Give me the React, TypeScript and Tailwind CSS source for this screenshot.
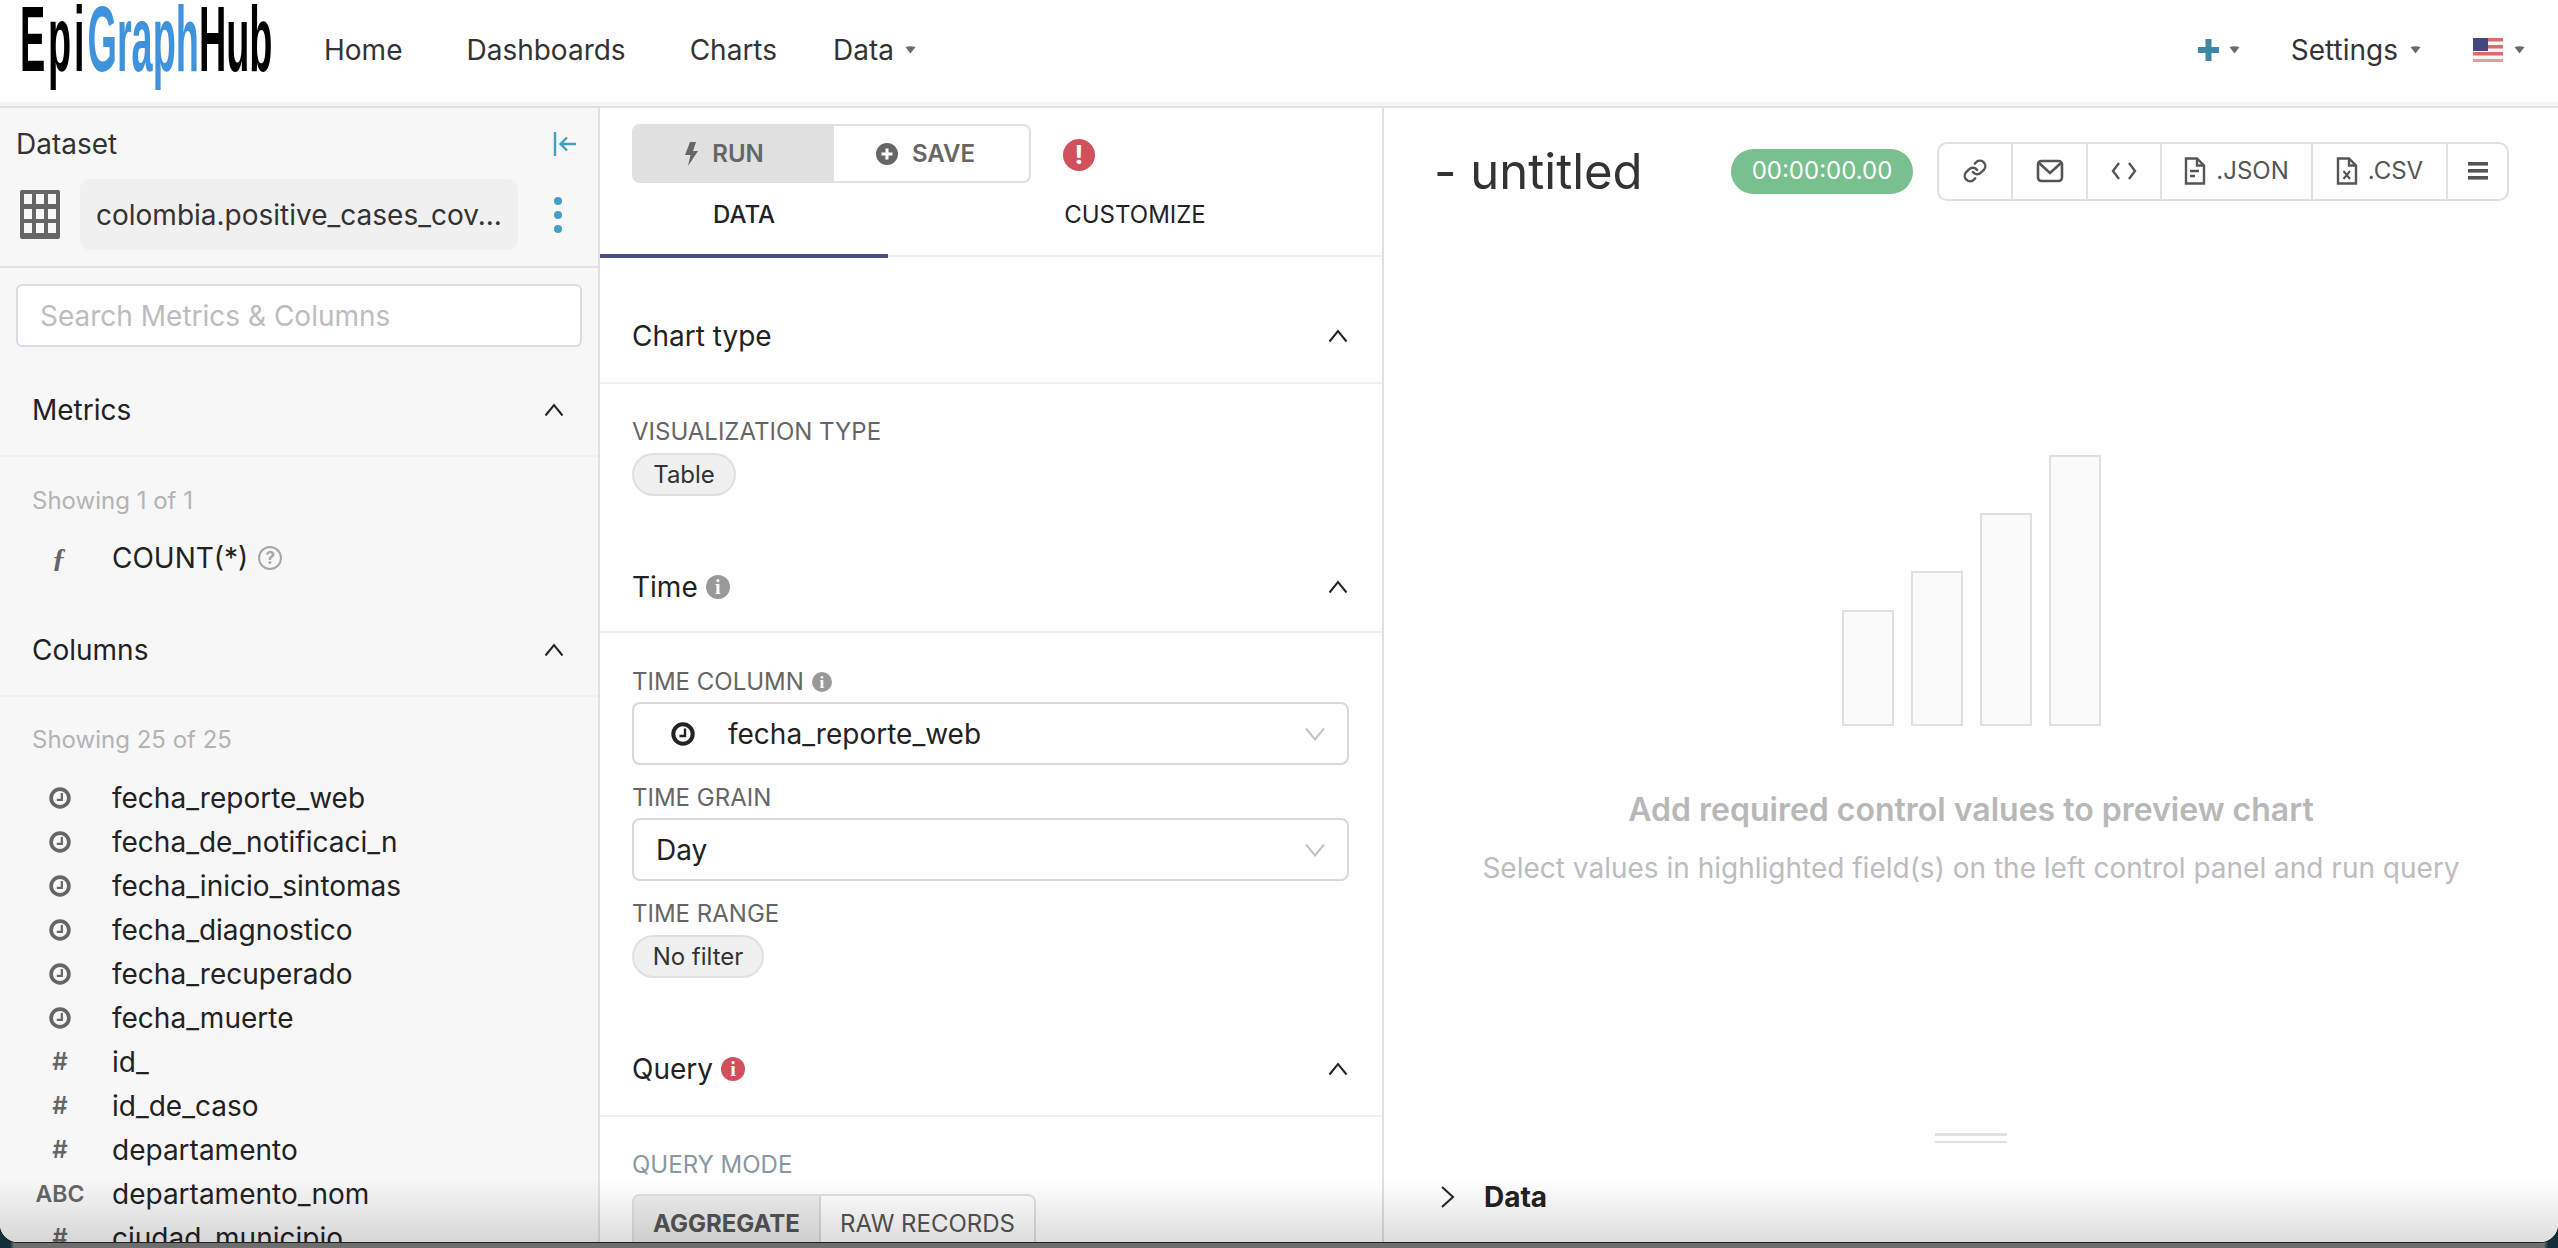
import React from "react";

const sans = "font-['Inter','Liberation_Sans',sans-serif]";

function Caret({ className = "" }: { className?: string }) {
  return (
    <svg width="11" height="8" viewBox="0 0 11 8" className={className}>
      <path d="M0.5 1 Q5.5 -0.5 10.5 1 L5.5 7.5 Z" fill="#6b6b6b" />
    </svg>
  );
}

function Clock({ size = 24, color = "#666666" }: { size?: number; color?: string }) {
  return (
    <svg width={size} height={size} viewBox="0 0 24 24">
      <circle cx="12" cy="12" r="9.7" fill="none" stroke={color} strokeWidth="4" />
      <path d="M14 6.5V14H8.5" fill="none" stroke={color} strokeWidth="2.4" />
    </svg>
  );
}

function Chevron({ className = "" }: { className?: string }) {
  return (
    <svg width="20" height="14" viewBox="0 0 20 14" className={className}>
      <path d="M1.5 12.5L10 2L18.5 12.5" fill="none" stroke="#222222" strokeWidth="2" />
    </svg>
  );
}

function SelectChevron() {
  return (
    <svg width="20" height="14" viewBox="0 0 20 14">
      <path d="M1 1.5L10 12.5L19 1.5" fill="none" stroke="#c4c4c4" strokeWidth="2" />
    </svg>
  );
}

function Info({ color = "#999999" }: { color?: string }) {
  return (
    <span
      className="inline-flex h-[24px] w-[24px] items-center justify-center rounded-full font-['Liberation_Serif',serif] text-[20px] font-bold leading-none text-white"
      style={{ backgroundColor: color }}
    >
      i
    </span>
  );
}

function SectionHead({ title, icon, h = "h-[96px]" }: { title: string; icon?: React.ReactNode; h?: string }) {
  return (
    <div className={`flex shrink-0 items-center justify-between border-b-2 border-[#f0f0f0] pl-[32px] pr-[16px] pt-[2px] ${h}`}>
      <div className="flex items-center gap-[8px] text-[28px] text-[#222222]">
        <span>{title}</span>
        {icon}
      </div>
      <Chevron className="mr-[18px]" />
    </div>
  );
}

function Label({ children, className = "" }: { children: React.ReactNode; className?: string }) {
  return <div className={`-mb-[1px] pt-[1px] text-[24px] leading-[30px] ${className || "text-[#666666]"}`}>{children}</div>;
}

function Pill({ children, width }: { children: React.ReactNode; width: string }) {
  return (
    <div className={`flex h-[43px] items-center justify-center rounded-full border-2 border-[#e0e0e0] bg-[#f0f0f0] text-[24px] text-[#333333] ${width}`}>
      {children}
    </div>
  );
}

function SelectBox({ children }: { children: React.ReactNode }) {
  return (
    <div className="flex h-[63px] items-center justify-between rounded-[8px] border-2 border-[#d9d9d9] bg-white pr-[22px] text-[28px] text-[#222222]">
      {children}
      <SelectChevron />
    </div>
  );
}

const columns: [string, string][] = [
  ["clock", "fecha_reporte_web"],
  ["clock", "fecha_de_notificaci_n"],
  ["clock", "fecha_inicio_sintomas"],
  ["clock", "fecha_diagnostico"],
  ["clock", "fecha_recuperado"],
  ["clock", "fecha_muerte"],
  ["#", "id_"],
  ["#", "id_de_caso"],
  ["#", "departamento"],
  ["ABC", "departamento_nom"],
  ["#", "ciudad_municipio"],
];

function LeftPanel() {
  return (
    <aside className="flex w-[600px] shrink-0 flex-col overflow-hidden border-r-2 border-[#e0e0e0] bg-[#f7f7f7]">
      <div className="h-[160px] shrink-0 border-b-2 border-[#e3e3e3]">
        <div className="flex h-[71px] items-center justify-between pl-[16px] pr-[21px]">
          <span className="text-[28px] leading-[34px] text-[#333333]">Dataset</span>
          <svg width="24" height="26" viewBox="0 0 24 26">
            <path d="M2 1V25" stroke="#45a0c4" strokeWidth="2.4" />
            <path d="M23 13H8M14 6.5L7.5 13L14 19.5" fill="none" stroke="#45a0c4" strokeWidth="2.4" />
          </svg>
        </div>
        <div className="flex items-center pl-[20px]">
          <svg width="40" height="49" viewBox="0 0 40 49" className="shrink-0">
            <rect x="0" y="0" width="40" height="49" rx="2" fill="#666666" />
            {[4, 19, 33].map((y) =>
              [4, 16, 28].map((x) => <rect key={`${x}-${y}`} x={x} y={y} width="8" height="10" fill="#f7f7f7" />)
            )}
          </svg>
          <div className="ml-[20px] flex h-[71px] w-[438px] items-center rounded-[10px] bg-[#f0f0f0] pl-[16px] text-[28px] text-[#333333]">
            colombia.positive_cases_cov...
          </div>
          <div className="ml-[36px] flex flex-col gap-[6px]">
            <span className="h-[8px] w-[8px] rounded-full bg-[#45a0c4]" />
            <span className="h-[8px] w-[8px] rounded-full bg-[#45a0c4]" />
            <span className="h-[8px] w-[8px] rounded-full bg-[#45a0c4]" />
          </div>
        </div>
      </div>
      <div className="shrink-0 px-[16px] pt-[16px]">
        <div className="flex h-[63px] items-center rounded-[6px] border-2 border-[#d9dce3] bg-white pl-[22px] text-[28px] text-[#bdbdbd]">
          Search Metrics &amp; Columns
        </div>
      </div>
      <div className="mt-[18px] flex h-[92px] shrink-0 items-center justify-between border-b-2 border-[#f0f0f0] pl-[32px] pr-[16px]">
        <span className="text-[28px] text-[#222222]">Metrics</span>
        <Chevron className="mr-[18px]" />
      </div>
      <div className="shrink-0 pl-[32px] pt-[29px] text-[24px] leading-[30px] text-[#b3b3b3]">Showing 1 of 1</div>
      <div className="mt-[25px] flex h-[34px] shrink-0 items-center">
        <span className="w-[112px] pl-[52px] font-['Liberation_Serif',serif] text-[28px] font-bold italic leading-none text-[#666666]">
          ƒ
        </span>
        <span className="text-[28px] text-[#222222]">COUNT(*)</span>
        <span className="ml-[10px] flex h-[24px] w-[24px] items-center justify-center rounded-full border-2 border-[#a6a6a6] text-[17px] font-bold leading-none text-[#a6a6a6]">
          ?
        </span>
      </div>
      <div className="mt-[30px] flex h-[92px] shrink-0 items-center justify-between border-b-2 border-[#f0f0f0] pl-[32px] pr-[16px]">
        <span className="text-[28px] text-[#222222]">Columns</span>
        <Chevron className="mr-[18px]" />
      </div>
      <div className="shrink-0 pl-[32px] pt-[28px] text-[24px] leading-[30px] text-[#b3b3b3]">Showing 25 of 25</div>
      <div className="mt-[21px] flex shrink-0 flex-col">
        {columns.map(([type, name]) => (
          <div key={name} className="flex h-[44px] shrink-0 items-center">
            <div className="flex w-[112px] justify-center pl-[8px]">
              {type === "clock" ? (
                <Clock size={22} />
              ) : (
                <span className={`font-semibold text-[#666666] ${type === "ABC" ? "text-[23px]" : "text-[24px]"}`}>{type}</span>
              )}
            </div>
            <span className="text-[28px] text-[#222222]">{name}</span>
          </div>
        ))}
      </div>
    </aside>
  );
}

function MiddlePanel() {
  return (
    <section className="flex w-[784px] shrink-0 flex-col overflow-hidden border-r-2 border-[#e0e0e0] bg-white">
      <div className="flex h-[75px] shrink-0 items-end pl-[32px]">
        <div className="flex h-[59px] w-[399px] overflow-hidden rounded-[8px] border-2 border-[#e0e0e0] text-[24px] font-semibold text-[#666666]">
          <div className="flex w-[200px] items-center justify-center gap-[14px] bg-[#e0e0e0] pr-[20px]">
            <svg width="14" height="24" viewBox="0 0 14 24">
              <path d="M6 0H12L9 9H14L4 24L6.5 13H1Z" fill="#666666" />
            </svg>
            RUN
          </div>
          <div className="flex flex-1 items-center justify-center gap-[14px] bg-white pr-[12px]">
            <svg width="22" height="22" viewBox="0 0 22 22">
              <circle cx="11" cy="11" r="11" fill="#666666" />
              <path d="M11 5.5V16.5M5.5 11H16.5" stroke="white" strokeWidth="3" />
            </svg>
            SAVE
          </div>
        </div>
        <div className="mb-[12px] ml-[32px] flex h-[32px] w-[32px] items-center justify-center rounded-full bg-[#d0505c] text-[26px] font-bold leading-none text-white">
          !
        </div>
      </div>
      <div className="flex h-[75px] shrink-0 text-[24px] text-[#222222]">
        <div className="flex w-[288px] items-center justify-center border-b-4 border-[#484e80] pb-[8px] font-medium">DATA</div>
        <div className="mb-[1px] flex flex-1 items-center justify-center border-b-2 border-[#f0f0f0] pb-[9px]">CUSTOMIZE</div>
      </div>
      <div className="shrink-0 pt-[30px]">
        <SectionHead title="Chart type" h="h-[96px]" />
      </div>
      <div className="h-[111px] shrink-0 px-[32px] pt-[32px]">
        <Label>VISUALIZATION TYPE</Label>
        <div className="mt-[7px]">
          <Pill width="w-[104px]">Table</Pill>
        </div>
      </div>
      <div className="shrink-0 pt-[45px]">
        <SectionHead title="Time" icon={<Info />} h="h-[93px]" />
      </div>
      <div className="shrink-0 pl-[32px] pr-[33px] pt-[33px]">
        <Label className="flex items-center gap-[8px] text-[#666666]">
          TIME COLUMN
          <span className="flex h-[20px] w-[20px] items-center justify-center rounded-full bg-[#999999] font-['Liberation_Serif',serif] text-[17px] font-bold leading-none text-white">
            i
          </span>
        </Label>
        <div className="mt-[6px]">
          <SelectBox>
            <div className="flex items-center">
              <span className="ml-[37px] mr-[33px]">
                <Clock size={24} color="#222222" />
              </span>
              fecha_reporte_web
            </div>
          </SelectBox>
        </div>
        <Label className="mt-[17px] text-[#666666]">TIME GRAIN</Label>
        <div className="mt-[6px]">
          <SelectBox>
            <span className="pl-[22px]">Day</span>
          </SelectBox>
        </div>
        <Label className="mt-[17px] text-[#666666]">TIME RANGE</Label>
        <div className="mt-[7px]">
          <Pill width="w-[132px]">No filter</Pill>
        </div>
      </div>
      <div className="shrink-0 pt-[42px]">
        <SectionHead title="Query" icon={<Info color="#d0505c" />} h="h-[97px]" />
      </div>
      <div className="shrink-0 px-[32px] pt-[32px]">
        <Label className="text-[#8a979f]">QUERY MODE</Label>
        <div className="mt-[15px] flex h-[60px] w-[404px] overflow-hidden rounded-t-[8px] border-2 border-[#e0e0e0] text-[24px] text-[#555555]">
          <div className="flex w-[187px] items-center justify-center border-r-2 border-[#d9d9d9] bg-[#eeeeee] font-bold">AGGREGATE</div>
          <div className="flex flex-1 items-center justify-center">RAW RECORDS</div>
        </div>
      </div>
    </section>
  );
}

function ToolBtn({ children, width }: { children: React.ReactNode; width: string }) {
  return (
    <div className={`flex h-full items-center justify-center gap-[10px] border-r-2 border-[#e0e0e0] text-[24px] text-[#555555] last:border-r-0 ${width}`}>
      {children}
    </div>
  );
}

function FileIcon({ x }: { x?: boolean }) {
  return (
    <svg width="22" height="28" viewBox="0 0 22 28">
      <path d="M2 1.5H13L20 8.5V26.5H2Z M13 1.5V8.5H20" fill="none" stroke="#555555" strokeWidth="2.4" />
      {x ? (
        <path d="M7.5 14L14 22M14 14L7.5 22" stroke="#555555" strokeWidth="2" />
      ) : (
        <path d="M6 14H15M6 19H11" stroke="#555555" strokeWidth="2.4" />
      )}
    </svg>
  );
}

function RightPanel() {
  const bars = ["h-[116px]", "h-[155px]", "h-[213px]", "h-[271px]"];
  return (
    <section className="flex min-w-0 flex-1 flex-col overflow-hidden bg-white">
      <div className="flex h-[126px] shrink-0 items-center pl-[50px]">
        <span className="w-[297px] text-[49px] leading-none text-[#333333]">- untitled</span>
        <span className="flex h-[45px] w-[182px] items-center justify-center rounded-full bg-[#78c08e] text-[24px] text-white">
          00:00:00.00
        </span>
        <div className="ml-[24px] flex h-[59px] w-[572px] overflow-hidden rounded-[10px] border-2 border-[#e0e0e0]">
          <ToolBtn width="w-[74px]">
            <svg width="26" height="28" viewBox="0 0 24 24" fill="none" stroke="#555555" strokeWidth="2.2" strokeLinecap="round">
              <path d="M10 13a5 5 0 0 0 7.5.5l3-3a5 5 0 0 0-7-7l-1.7 1.7" />
              <path d="M14 11a5 5 0 0 0-7.5-.5l-3 3a5 5 0 0 0 7 7l1.7-1.7" />
            </svg>
          </ToolBtn>
          <ToolBtn width="w-[75px]">
            <svg width="28" height="24" viewBox="0 0 28 24" fill="none" stroke="#555555" strokeWidth="2.6">
              <rect x="2" y="2" width="24" height="20" rx="3.5" />
              <path d="M3 4L14 14L25 4" />
            </svg>
          </ToolBtn>
          <ToolBtn width="w-[74px]">
            <svg width="26" height="20" viewBox="0 0 26 20" fill="none" stroke="#555555" strokeWidth="2.4">
              <path d="M8 2L2 10L8 18M18 2L24 10L18 18" />
            </svg>
          </ToolBtn>
          <ToolBtn width="w-[151px]">
            <FileIcon />
            .JSON
          </ToolBtn>
          <ToolBtn width="w-[135px]">
            <FileIcon x />
            .CSV
          </ToolBtn>
          <ToolBtn width="flex-1">
            <svg width="20" height="18" viewBox="0 0 20 18" fill="#555555">
              <rect width="20" height="3.6" />
              <rect y="7" width="20" height="3.6" />
              <rect y="14" width="20" height="3.6" />
            </svg>
          </ToolBtn>
        </div>
      </div>
      <div className="flex flex-1 flex-col items-center">
        <div className="ml-[1px] mt-[221px] flex h-[271px] shrink-0 items-end gap-[17px]">
          {bars.map((h) => (
            <div key={h} className={`w-[52px] border-2 border-[#e0e0e0] bg-[#fafafa] ${h}`} />
          ))}
        </div>
        <div className="mt-[66px] text-[32px] font-semibold leading-[36px] text-[#b8b8b8]">
          Add required control values to preview chart
        </div>
        <div className="mt-[22px] text-[28px] leading-[36px] text-[#bdbdbd]">
          Select values in highlighted field(s) on the left control panel and run query
        </div>
        <div className="mt-[247px] flex w-[72px] flex-col gap-[5px]">
          <div className="h-[3px] bg-[#e0e0e0]" />
          <div className="h-[2px] bg-[#e0e0e0]" />
        </div>
      </div>
      <div className="flex h-[74px] shrink-0 items-start gap-[28px] pl-[56px] pt-[12px]">
        <svg width="16" height="24" viewBox="0 0 16 24" className="mt-[5px]">
          <path d="M2 2L13 12L2 22" fill="none" stroke="#222222" strokeWidth="2" />
        </svg>
        <span className="text-[28px] font-bold leading-[34px] text-[#222222]">Data</span>
      </div>
    </section>
  );
}

export default function App() {
  return (
    <div className={`relative h-[1248px] w-[2558px] overflow-hidden bg-[linear-gradient(90deg,#12303a_0,#12303a_10px,#6e6e6e_14px,#6e6e6e_2544px,#12303a_2548px,#12303a_100%)] ${sans}`}>
      <div className="relative flex h-[1242px] flex-col overflow-hidden rounded-b-[18px] bg-white shadow-[0_1px_0_#222222]">
        <header className="flex h-[108px] shrink-0 items-center border-b-2 border-b-[#e0e0e0] bg-white pb-[6px] pl-[20px] pr-[33px] shadow-[inset_0_-4px_0_#f5f5f5]">
          <div className="relative h-[96px] w-[304px] shrink-0 self-start">
            <span className="absolute left-0 top-[2px] origin-left scale-x-[0.407] whitespace-nowrap font-['Liberation_Sans',sans-serif] text-[93px] font-bold leading-[75px] text-black">
              <span className="tracking-[7px]">Epi</span>
              <span className="text-[#3f92dc]">Graph</span>Hub
            </span>
          </div>
          <nav className="flex items-center text-[28px] text-[#333333]">
            <span>Home</span>
            <span className="ml-[64px]">Dashboards</span>
            <span className="ml-[64px]">Charts</span>
            <span className="ml-[56px]">Data</span>
            <Caret className="ml-[11px]" />
          </nav>
          <div className="ml-auto flex items-center text-[28px] text-[#333333]">
            <svg width="21" height="24" viewBox="0 0 21 24">
              <path d="M10.5 1V23M0 12H21" stroke="#3f87a5" strokeWidth="6" />
            </svg>
            <Caret className="ml-[10px]" />
            <span className="ml-[51px]">Settings</span>
            <Caret className="ml-[12px]" />
            <svg width="30" height="24" viewBox="0 0 30 24" className="ml-[52px]">
              <rect width="30" height="24" fill="#f5f5f5" />
              {[0, 2, 4, 6].map((i) => (
                <rect key={i} y={i * 3.5} width="30" height="3.5" fill="#dd6b6b" />
              ))}
              <rect width="15" height="13" fill="#41477f" />
              <rect y="21" width="30" height="3" fill="#d9a0a0" />
            </svg>
            <Caret className="ml-[11px]" />
          </div>
        </header>
        <main className="flex min-h-0 flex-1">
          <LeftPanel />
          <MiddlePanel />
          <RightPanel />
        </main>
        <div className="pointer-events-none absolute inset-x-0 bottom-0 h-[62px] bg-gradient-to-b from-transparent to-[#00000022]" />
      </div>
    </div>
  );
}
